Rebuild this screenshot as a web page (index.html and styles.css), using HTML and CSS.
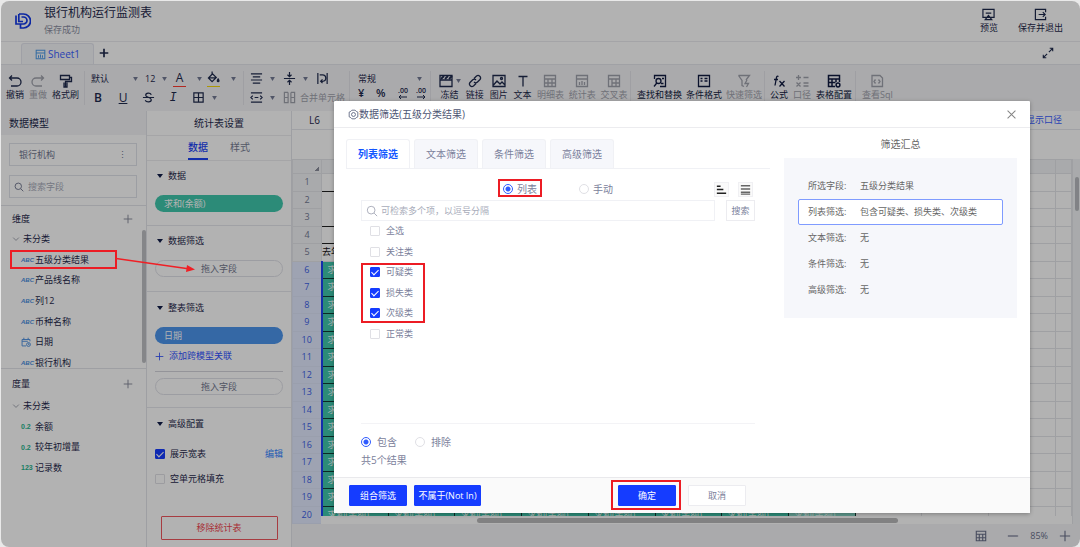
FILE: index.html
```html
<!DOCTYPE html>
<html lang="zh-CN">
<head>
<meta charset="utf-8">
<title>银行机构运行监测表</title>
<link rel="stylesheet" href="styles.css">
</head>
<body>
<svg class="sprite" aria-hidden="true">
  <symbol id="caret" viewBox="0 0 6 5"><path d="M0 0h6L3 5z" fill="#737a94"/></symbol>
  <symbol id="undo" viewBox="0 0 14 14"><path d="M4 1.500 1.500 4 4 6.500M1.500 4H9a3.700 3.700 0 0 1 0 8H3"/></symbol>
  <symbol id="redo" viewBox="0 0 14 14"><path d="M10 1.500 12.500 4 10 6.500M12.500 4H5a3.700 3.700 0 0 0 0 8h6"/></symbol>
  <symbol id="brush" viewBox="0 0 14 14"><path d="M1.500 1.500h9v4h-9zM10.500 3.500h2v4H6.500v5M5 8.500v4.500h3V8.500"/></symbol>
  <symbol id="bucket" viewBox="0 0 14 14"><path d="M5.500 .500v3M6 3 1.500 7.500 5.500 11.500 10 7zM2 7.500h7.500"/><path d="M12 8.500c-1.500 2-1 3 0 3s1.500-1 0-3z" fill="currentColor"/></symbol>
  <symbol id="strike" viewBox="0 0 14 14"><path d="M10 4C9 1.500 4 1.700 4 4.500 4 7 10 6.500 10 9.500 10 12.500 4.500 12.500 3.500 10M1 7h12"/></symbol>
  <symbol id="borders" viewBox="0 0 14 14"><path d="M2 2h10v10H2zM7 2v10M2 7h10"/></symbol>
  <symbol id="align" viewBox="0 0 14 14"><path d="M1 2h12M3 5.300h8M1 8.600h12M3 12h8"/></symbol>
  <symbol id="valign" viewBox="0 0 14 14"><path d="M1 7h12M7 0v5M4.800 3 7 5l2.200-2M7 14V9M4.800 11 7 9l2.200 2"/></symbol>
  <symbol id="wrap" viewBox="0 0 14 14"><path d="M2 1v12M12 1v12M4 3h3a3 3 0 0 1 0 7H5M7 8l-2 2 2 2"/></symbol>
  <symbol id="indent" viewBox="0 0 14 14"><path d="M1 2h12M1 12h12M5 7h4M3 5 1 7l2 2M11 5l2 2-2 2"/></symbol>
  <symbol id="merge" viewBox="0 0 14 14"><path d="M5.500 1.500h-4v11h4v-11M8.500 1.500h4v11h-4v-11M1.500 7h4M8.500 7h4"/></symbol>
  <symbol id="freeze" viewBox="0 0 14 14"><path d="M1 1.500h12v11H1zM1 6h12"/><path d="m2 5 3-3M6 5l3-3M10 5l3-3" stroke-width="1.800"/></symbol>
  <symbol id="link" viewBox="0 0 14 14"><path d="M6 4.500 8.500 2a2.500 2.500 0 0 1 3.500 3.500L9.500 8A2.500 2.500 0 0 1 6 8M8 9.500 5.500 12A2.500 2.500 0 0 1 2 8.500L4.500 6A2.500 2.500 0 0 1 8 6"/></symbol>
  <symbol id="image" viewBox="0 0 14 14"><path d="M1 1.500h12v11H1zM1.500 11l3.500-4 3 3 2-2 3 3"/><circle cx="9.500" cy="4.500" r="1"/></symbol>
  <symbol id="text" viewBox="0 0 14 14"><path d="M2.500 2.500h9M7 2.500v10"/></symbol>
  <symbol id="grid" viewBox="0 0 14 14"><path d="M1.500 1.500h11v11h-11zM1.500 5h11M1.500 9h11M5 5v7.500M9 5v7.500"/></symbol>
  <symbol id="chart" viewBox="0 0 14 14"><path d="M1.500 1.500h11v11h-11zM1.500 5h11M4.500 8v3M7 7v4M9.500 8v3"/></symbol>
  <symbol id="cross" viewBox="0 0 14 14"><path d="M1.500 1.500h11v11h-11zM1.500 5h11M5 9h7.500M5 5v7.500M9 5v7.500"/></symbol>
  <symbol id="find" viewBox="0 0 14 14"><path d="M1.500 5V1.500h11v11H7M8 9.500h2.500M9 4.500h2"/><circle cx="5.500" cy="7" r="2.500"/><path d="M3.800 9 1 12.500"/></symbol>
  <symbol id="cond" viewBox="0 0 14 14"><path d="M1.500 1.500h11v11h-11zM3.500 4.500h2M3.500 7h2M7.500 4.500h3M7.500 7h3"/></symbol>
  <symbol id="funnel" viewBox="0 0 14 14"><path d="M1.500 1.500h11L9 6M1.500 1.500 5 6.500v5l2 1M10 6 8 9.500h3.500L9.500 13"/></symbol>
  <symbol id="calc" viewBox="0 0 14 14"><path d="M1 3.500h5M3.500 1v5M8.500 3.500h5M1.500 8.500l4 4M5.500 8.500l-4 4M8.500 9h5M8.500 12h5"/></symbol>
  <symbol id="gridset" viewBox="0 0 14 14"><path d="M8 12.500H1.500v-11h11V8M1.500 5h11M1.500 8.500h7M5 5v7.500M9 5v3" stroke-width="1.500"/><circle cx="11" cy="11" r="1.900" stroke-width="1.500"/></symbol>
  <symbol id="sql" viewBox="0 0 14 14"><path d="M2 1.500h8l2.500 2.500v8.500H2zM5.500 5.500 4 7.500l1.500 2M8.500 5.500l1.500 2-1.500 2"/></symbol>
  <symbol id="fx" viewBox="0 0 14 14"><path d="M6.500 2.500C4.800 1.500 4.500 3 4.200 5L3 11.500M2 5.500h4M7.500 7l5 5.500M12.500 7l-5 5.500"/></symbol>
  <symbol id="search" viewBox="0 0 14 14"><circle cx="6" cy="6" r="4.500"/><path d="m9.500 9.500 3.500 3.500"/></symbol>
  <symbol id="plus" viewBox="0 0 14 14"><path d="M7 1v12M1 7h12"/></symbol>
  <symbol id="chev" viewBox="0 0 14 14"><path d="m2 4.500 5 5 5-5"/></symbol>
  <symbol id="date" viewBox="0 0 14 14"><path d="M7 12.500H1.500v-9h11V6M1.500 6h8M4 1v3M10 1v3"/><circle cx="10.500" cy="10.500" r="2.700"/><path d="M10.500 9v1.700h1.300"/></symbol>
</svg>

<div class="app">
  <header class="top">
    <svg class="logo" viewBox="0 0 16 16"><path d="M4 1h4.500a6.700 6.700 0 0 1 0 14H5.500v-3.500M1 2.500v8.500h7.500a3 3 0 0 0 0-7H6.500M3.800 1v7.500H8"/></svg>
    <div class="doc"><h1>银行机构运行监测表</h1><p>保存成功</p></div>
    <div class="top-actions">
      <button class="tool"><svg class="ic" viewBox="0 0 14 14"><path d="M1 1.500h12V10H1zM4 5.500h6M7 8l-3.500 4.500h7z"/></svg>预览</button>
      <button class="tool"><svg class="ic" viewBox="0 0 14 14"><path d="M12.500 4.500v-3h-11v11h11v-3M5 7h7M9.500 4.500 12 7l-2.500 2.500"/></svg>保存并退出</button>
    </div>
  </header>
  <nav class="sheets">
    <button class="sheet-tab"><svg class="ic" viewBox="0 0 14 14"><use href="#chart"/></svg>Sheet1</button>
    <button class="add-sheet" aria-label="新增"><svg class="ic" viewBox="0 0 14 14"><use href="#plus"/></svg></button>
    <button class="expand" aria-label="全屏"><svg class="ic" viewBox="0 0 14 14"><path d="M8 6l4.500-4.500M9 1.500h3.500V5M6 8l-4.500 4.500M1.500 9v3.500H5"/></svg></button>
  </nav>

  <div class="toolbar">
    <div class="group g-edit">
      <button class="tool"><svg class="ic"><use href="#undo"/></svg>撤销</button>
      <button class="tool off"><svg class="ic"><use href="#redo"/></svg>重做</button>
      <button class="tool"><svg class="ic"><use href="#brush"/></svg>格式刷</button>
    </div>
    <div class="group stack g-font">
      <div class="line"><button class="pick w-font">默认<svg class="car"><use href="#caret"/></svg></button><button class="pick w-size">12<svg class="car"><use href="#caret"/></svg></button><button class="pick w-col"><span class="mark red">A</span><svg class="car"><use href="#caret"/></svg></button><button class="pick w-col"><span class="mark yellow"><svg class="ic"><use href="#bucket"/></svg></span><svg class="car"><use href="#caret"/></svg></button></div>
      <div class="line even"><button class="b">B</button><button class="u">U</button><button><svg class="ic"><use href="#strike"/></svg></button><button class="i">I</button><button><svg class="ic"><use href="#borders"/></svg><svg class="car"><use href="#caret"/></svg></button></div>
    </div>
    <div class="group stack g-align">
      <div class="line even3"><button><svg class="ic"><use href="#align"/></svg><svg class="car"><use href="#caret"/></svg></button><button><svg class="ic"><use href="#valign"/></svg><svg class="car"><use href="#caret"/></svg></button><button><svg class="ic"><use href="#wrap"/></svg></button></div>
      <div class="line even3"><button><svg class="ic"><use href="#indent"/></svg><svg class="car"><use href="#caret"/></svg></button><button class="off merge"><svg class="ic"><use href="#merge"/></svg>合并单元格</button></div>
    </div>
    <div class="group stack g-num">
      <div class="line"><button class="pick w-num">常规<svg class="car"><use href="#caret"/></svg></button></div>
      <div class="line nums"><button>¥</button><button>%</button><button class="dec">.00<svg viewBox="0 0 10 4"><path d="M9 2H1M3 0 1 2l2 2"/></svg></button><button class="dec">.00<svg viewBox="0 0 10 4"><path d="M1 2h8M7 0l2 2-2 2"/></svg></button></div>
    </div>
    <div class="group g-insert">
      <button class="tool w26"><span class="duo"><svg class="ic"><use href="#freeze"/></svg><svg class="car"><use href="#caret"/></svg></span>冻结</button>
      <button class="tool w24"><svg class="ic"><use href="#link"/></svg>链接</button>
      <button class="tool w24"><svg class="ic"><use href="#image"/></svg>图片</button>
      <button class="tool w24"><svg class="ic"><use href="#text"/></svg>文本</button>
      <button class="tool off w32"><svg class="ic"><use href="#grid"/></svg>明细表</button>
      <button class="tool off w32"><svg class="ic"><use href="#chart"/></svg>统计表</button>
      <button class="tool off w32"><svg class="ic"><use href="#cross"/></svg>交叉表</button>
    </div>
    <div class="group g-find">
      <button class="tool strong"><svg class="ic"><use href="#find"/></svg>查找和替换</button>
      <button class="tool strong"><svg class="ic"><use href="#cond"/></svg>条件格式</button>
      <button class="tool off"><svg class="ic"><use href="#funnel"/></svg>快速筛选</button>
    </div>
    <div class="group g-formula">
      <button class="tool strong"><svg class="ic"><use href="#fx"/></svg>公式</button>
      <button class="tool off"><svg class="ic"><use href="#calc"/></svg>口径</button>
      <button class="tool strong"><svg class="ic"><use href="#gridset"/></svg>表格配置</button>
    </div>
    <div class="group g-sql">
      <button class="tool off"><svg class="ic"><use href="#sql"/></svg>查看Sql</button>
    </div>
  </div>

  <main class="work">
    <aside class="model">
      <h2>数据模型</h2>
      <button class="field source">银行机构<span class="dots">⋮</span></button>
      <label class="field find"><svg class="ic"><use href="#search"/></svg><input type="text" placeholder="搜索字段" aria-label="搜索字段"></label>
      <section class="dims">
        <h3>维度<svg class="ic"><use href="#plus"/></svg></h3>
        <ul class="tree seven">
          <li class="root"><svg class="ic"><use href="#chev"/></svg>未分类</li>
          <li><i>ABC</i>五级分类结果</li>
          <li><i>ABC</i>产品线名称</li>
          <li><i>ABC</i>列12</li>
          <li><i>ABC</i>币种名称</li>
          <li><i><svg class="ic"><use href="#date"/></svg></i>日期</li>
          <li><i>ABC</i>银行机构</li>
        </ul>
        <span class="thumb"></span>
      </section>
      <section class="measures">
        <h3>度量<svg class="ic"><use href="#plus"/></svg></h3>
        <ul class="tree four">
          <li class="root"><svg class="ic"><use href="#chev"/></svg>未分类</li>
          <li><i class="num">0.2</i>余额</li>
          <li><i class="num">0.2</i>较年初增量</li>
          <li><i class="num">123</i>记录数</li>
        </ul>
      </section>
    </aside>

    <aside class="settings">
      <h2>统计表设置</h2>
      <div class="tabs"><button class="on">数据</button><button>样式</button></div>
      <section class="s-data"><h3>数据</h3><div class="pill teal">求和(余额)</div></section>
      <section class="s-filter"><h3>数据筛选</h3><div class="pill drop">拖入字段</div></section>
      <section class="s-table"><h3>整表筛选</h3><div class="pill blue">日期</div>
        <button class="relate"><svg class="ic"><use href="#plus"/></svg>添加跨模型关联</button>
        <hr><div class="pill drop">拖入字段</div></section>
      <section class="s-adv"><h3>高级配置</h3>
        <div class="opt"><label><input type="checkbox" checked>展示宽表</label><a href="#">编辑</a></div>
        <div class="opt"><label><input type="checkbox">空单元格填充</label></div>
        <button class="remove">移除统计表</button></section>
    </aside>

    <section class="sheet">
      <div class="cellbar"><span>L6</span><a href="#">显示口径</a></div>
      <div class="formula"></div>
      <div class="canvas">
        <div class="gridwrap">
        <table class="cells">
          <colgroup><col class="c-head"><col><col><col><col><col><col><col><col><col><col><col><col class="c-last"></colgroup>
          <thead><tr><th class="corner"></th><th></th><th></th><th></th><th></th><th></th><th></th><th></th><th></th><th></th><th></th><th></th><th></th></tr></thead>
          <tbody id="rows"></tbody>
        </table>
        <span class="hbar"><span></span></span>
        </div>
        <div class="vbar"><span></span></div>
      </div>
      <footer class="status"><svg class="ic big"><use href="#grid"/></svg><button aria-label="缩小"><svg class="ic" viewBox="0 0 14 14"><path d="M1 7h12"/></svg></button><span>85%</span><button aria-label="放大"><svg class="ic"><use href="#plus"/></svg></button></footer>
    </section>
  </main>

  <div class="mask"></div>

  <div class="modal" role="dialog" aria-label="数据筛选">
    <header class="m-head"><svg class="ic thin" viewBox="0 0 14 14"><path d="M5 1.500h4l1.500 1.500 2 1v6l-2 1L9 12.500H5L3.500 11l-2-1V4l2-1z"/><circle cx="7" cy="7" r="2.500"/></svg><h2>数据筛选(五级分类结果)</h2><button aria-label="关闭"><svg class="ic" viewBox="0 0 14 14"><path d="m2 2 10 10M12 2 2 12"/></svg></button></header>
    <div class="m-body">
      <div class="m-left">
        <div class="m-tabs"><button class="on">列表筛选</button><button>文本筛选</button><button>条件筛选</button><button>高级筛选</button></div>
        <div class="m-form">
          <div class="mode">
            <label><input type="radio" name="mode" checked>列表</label>
            <label><input type="radio" name="mode">手动</label>
            <div class="sorts"><button aria-label="排序"><svg viewBox="0 0 14 14"><path d="M2 3.500h4M2 7h7M2 11h10"/></svg></button><button aria-label="列表"><svg viewBox="0 0 14 14"><path d="M2 3h10M2 6.500h10M2 10h10M2 12h10" class="soft"/></svg></button></div>
          </div>
          <div class="query"><label><svg class="ic"><use href="#search"/></svg><input type="text" placeholder="可检索多个项，以逗号分隔" aria-label="检索"></label><button>搜索</button></div>
          <div class="choices">
            <label><input type="checkbox">全选</label>
            <label><input type="checkbox">关注类</label>
            <label><input type="checkbox" checked>可疑类</label>
            <label><input type="checkbox" checked>损失类</label>
            <label><input type="checkbox" checked>次级类</label>
            <label><input type="checkbox">正常类</label>
          </div>
          <div class="include">
            <div><label><input type="radio" name="inc" checked>包含</label><label><input type="radio" name="inc">排除</label></div>
            <p>共5个结果</p>
          </div>
        </div>
      </div>
      <div class="m-right">
        <h3>筛选汇总</h3>
        <dl>
          <div><dt>所选字段:</dt><dd>五级分类结果</dd></div>
          <div class="on"><dt>列表筛选:</dt><dd>包含可疑类、损失类、次级类</dd></div>
          <div><dt>文本筛选:</dt><dd>无</dd></div>
          <div><dt>条件筛选:</dt><dd>无</dd></div>
          <div><dt>高级筛选:</dt><dd>无</dd></div>
        </dl>
      </div>
    </div>
    <footer class="m-foot"><button class="pri">组合筛选</button><button class="pri wide">不属于(Not In)</button><button class="pri ok">确定</button><button>取消</button></footer>
  </div>

  <span class="note n-field"></span><span class="note n-mode"></span><span class="note n-list"></span><span class="note n-ok"></span>
  <svg class="arrow" viewBox="0 0 80 16"><path d="M0 1.500 74 12" stroke="#f01f25" stroke-width="1.500"/><path d="m71 8 8 4.500-9 2.500z" fill="#f01f25"/></svg>
</div>
<script src="rows.js"></script>
</body>
</html>
```
FILE: rows.js
```js
const body = document.getElementById('rows');
for (let n = 1; n <= 20; n++) {
  const tr = document.createElement('tr');
  if (n >= 6) tr.className = 'sel';
  const th = document.createElement('th');
  th.textContent = n;
  tr.append(th);
  for (let c = 1; c <= 12; c++) {
    const td = document.createElement('td');
    if (n >= 6 && c <= 8) {
      td.className = c === 8 ? 'val pale' : 'val';
      if (c === 1 || n === 20) td.textContent = '求和(余额)';
    } else if (n === 5 && c === 1) {
      td.className = 'year';
      td.textContent = '去年余额';
    } else if (c <= 8 && (n === 1 || n === 3 || n === 4)) {
      td.className = 'rule';
    } else if (c <= 8 && n === 2) {
      td.className = 'open';
    }
    tr.append(td);
  }
  body.append(tr);
}
```
FILE: styles.css
```css
* { box-sizing: border-box; margin: 0; padding: 0; }
body {
  background: #e9e9e9; color: #1f2a4d;
  font: 9px/14px "Open Sans", "Noto Sans CJK SC", sans-serif;
  height: 100vh; padding: 1px 0 0 1px; overflow: hidden;
}
button, input { font: inherit; color: inherit; background: none; border: 0; }
button { cursor: pointer; white-space: nowrap; }
h1, h2, h3 { font-size: inherit; font-weight: 400; }
ul { list-style: none; }
a { text-decoration: none; color: #2f62ff; }
svg { fill: none; stroke: currentColor; flex: none; }
symbol { overflow: visible; }
.sprite { position: absolute; width: 0; height: 0; }
.ic { width: 14px; height: 14px; stroke-width: 1.3; }
.car { width: 5px; height: 4px; stroke: none; }

.app { position: relative; height: 100%; display: flex; flex-direction: column; background: #fff; border-radius: 8px; overflow: hidden; }

.top { display: flex; align-items: center; height: 41px; padding: 0 17px 0 14px; border-bottom: 1px solid #ebebf0; }
.logo { width: 16px; height: 16px; stroke: #1238e8; stroke-width: 1.7; margin-right: 13px; }
.doc h1 { font-size: 12px; line-height: 18px; }
.doc p { color: #8b8fa3; line-height: 16px; }
.top-actions { margin-left: auto; display: flex; gap: 20px; }
.tool { display: flex; flex-direction: column; align-items: center; line-height: 14px; }
.top-actions .ic { width: 13px; height: 13px; }
.off { color: #a0a2ac; }
.strong { color: #101a40; }

.sheets { display: flex; align-items: center; height: 23px; padding: 0 26px 0 20px; border-bottom: 1px solid #e6e7ec; }
.sheet-tab { display: flex; align-items: center; justify-content: center; gap: 2px; width: 73px; height: 21px; align-self: flex-end; background: #f5f6fa; border: 1px solid #e4e6ee; border-bottom: 0; border-radius: 3px 3px 0 0; color: #3b5fff; font-size: 10px; }
.sheet-tab .ic { width: 11px; height: 11px; color: #4c9be8; }
.add-sheet { display: flex; align-items: center; margin-left: 5px; height: 14px; }
.add-sheet .ic { width: 10px; height: 10px; stroke-width: 2.4; }
.expand { display: flex; margin-left: auto; height: 12px; }
.expand .ic { width: 12px; height: 12px; }

.toolbar { display: flex; align-items: center; height: 46px; background: #f4f4f7; }
.group { display: flex; align-items: center; height: 34px; border-right: 1px solid #e4e4ea; flex: none; }
.group:last-child { border: 0; }
.g-edit { width: 84px; padding-left: 5px; gap: 5px; }
.stack { flex-direction: column; align-items: stretch; justify-content: space-between; }
.g-font { width: 159px; padding-left: 6px; }
.line { display: flex; align-items: center; height: 15px; }
.line button { display: flex; align-items: center; justify-content: center; gap: 7px; }
.line .ic { width: 13px; height: 13px; }
.line .pick { justify-content: space-between; }
.w-font { width: 47px; margin-right: 7px; }
.w-size { width: 22px; margin-right: 6px; }
.w-col { width: 29px; margin-right: 5px; }
.mark { display: flex; width: 13px; height: 16px; justify-content: center; border-bottom: 1px solid; font-size: 12px; }
.red { border-color: #ff3b30; }
.yellow { border-color: #f5d90a; }
.even { gap: 11px; }
.even button { width: 14px; font-size: 12px; }
.even button:last-child { width: 26px; gap: 7px; }
.even .b { font-weight: 600; }
.u { text-decoration: underline; }
.i { font-style: italic; font-family: "Liberation Mono", monospace; }
.g-align { width: 106px; padding-left: 6px; }
.even3 { gap: 7px; }
.even3 button { width: 26px; gap: 7px; justify-content: flex-start; }
.even3 .merge { width: auto; gap: 4px; }
.g-num { width: 81px; padding-left: 8px; }
.w-num { width: 64px; }
.nums { height: 18px; align-items: flex-start; font-weight: 600; }
.nums button { width: 19px; justify-content: flex-start; font-size: 11px; line-height: 12px; }
.nums .dec { flex-direction: column; gap: 0; align-items: center; font-size: 7px; line-height: 8px; }
.dec svg { width: 10px; height: 4px; }
.g-insert { width: 200px; padding-left: 5px; }
.w26 { width: 27px; }
.w24 { width: 24px; }
.w32 { width: 32px; }
.duo { display: flex; align-items: center; gap: 3px; margin-right: -2px; }
.g-find { width: 134px; padding-left: 6px; gap: 4px; }
.g-formula { width: 91px; padding-left: 5px; gap: 5px; }
.g-sql { padding-left: 6px; }

.work { flex: 1; display: flex; min-height: 0; }
.model, .settings { display: flex; flex-direction: column; flex: none; width: 146px; border-right: 1px solid #e3e4ea; }
.model h2 { height: 24px; padding: 0 8px; background: #f4f4f7; font-size: 10px; line-height: 24px; }
.field { display: flex; align-items: center; height: 23px; margin: 8px 9px 0 8px; border: 1px solid #e0e2ea; color: #70768f; }
.source { justify-content: space-between; padding: 0 9px; }
.find { gap: 4px; padding: 0 4px; margin-top: 9px; }
.find .ic { width: 10px; height: 10px; }
.find input { width: 90px; }
::placeholder { color: #a8acba; }
.dims { position: relative; height: 163px; margin-top: 7px; padding-top: 5px; border-top: 1px solid #e3e4ea; overflow: hidden; }
.measures { border-top: 1px solid #e3e4ea; padding-top: 7px; }
.model h3 { display: flex; align-items: center; justify-content: space-between; height: 16px; padding: 0 13px 0 11px; }
.model h3 .ic { width: 10px; height: 10px; color: #858998; }
.tree { display: grid; grid-auto-rows: 1fr; }
.seven { height: 144px; margin-top: 2px; }
.four { height: 82px; margin-top: 4px; }
.tree li { display: flex; align-items: center; padding-left: 20px; }
.tree .root { padding-left: 11px; gap: 3px; }
.root .ic { width: 8px; height: 8px; color: #858998; }
.tree i { width: 14px; color: #4b8fe0; font: italic 700 6px "Liberation Sans Narrow", "Liberation Sans", sans-serif; }
.tree i .ic { display: block; width: 10px; height: 10px; }
.tree .num { color: #28b48e; font-style: normal; font-size: 7px; }
.thumb { position: absolute; right: 0; top: 24px; width: 4px; height: 133px; border-radius: 3px; background: #bfc0c4; }

.settings { width: 145px; }
.settings h2 { height: 25px; font-size: 10px; line-height: 24px; text-align: center; border-bottom: 1px solid #ececf0; }
.tabs { display: flex; justify-content: center; gap: 22px; height: 25px; border-bottom: 1px solid #ececf0; font-size: 10px; color: #777d94; }
.tabs button { height: 24px; border-bottom: 2px solid transparent; }
.tabs .on { color: #1c43f5; font-weight: 500; border-bottom-color: #1c43f5; }
.settings section { padding: 7px 8px 0; border-bottom: 1px solid #e6e7ec; }
.settings h3 { display: flex; align-items: center; gap: 5px; height: 16px; padding-left: 2px; }
.settings h3::before { content: ""; border: 3px solid transparent; border-top: 4px solid #101c48; border-bottom: 0; }
.pill { height: 17px; border-radius: 9px; padding: 0 9px; line-height: 17px; margin-top: 11px; color: #fff; }
.teal { background: #40c7ad; }
.blue { background: #4c95ed; }
.drop { border: 1px solid #e0e1e8; color: #73788f; text-align: center; line-height: 15px; }
.settings .s-data { height: 65px; }
.settings .s-filter { height: 66px; }
.settings .s-table { height: 116px; padding-top: 8px; }
.relate { display: flex; align-items: center; gap: 5px; height: 14px; margin-top: 5px; color: #2f50ff; }
.relate .ic { width: 9px; height: 9px; }
.s-table hr { border: 0; border-top: 1px solid #d4d5db; margin-top: 8px; }
.s-table hr + .pill { margin-top: 6px; }
.settings .s-adv { flex: 1; border: 0; padding-top: 8px; }
.opt { display: flex; justify-content: space-between; height: 14px; margin-top: 11px; }
.s-adv h3 + .opt { margin-top: 15px; }
.opt label { display: flex; align-items: center; gap: 5px; }
.opt a { color: #3385ff; }
.remove { display: block; width: 117px; height: 24px; margin: 30px auto 0; border: 1px solid #f0565e; border-radius: 1px; color: #f0464e; }

input[type=checkbox], input[type=radio] { appearance: none; flex: none; width: 10px; height: 10px; border: 1px solid #e0e0e5; border-radius: 1px; }
input[type=checkbox]:checked { border-color: #153cff; background: #153cff; display: grid; place-items: start center; }
input[type=checkbox]:checked::before { content: ""; width: 3px; height: 6px; border: solid #fff; border-width: 0 1px 1px 0; transform: rotate(45deg); }
input[type=radio] { border-radius: 50%; }
input[type=radio]:checked { border-color: #2f5bff; background: radial-gradient(#2f5bff 0 2px, #fff 3px); }

.sheet { flex: 1; min-width: 0; display: flex; flex-direction: column; }
.cellbar { display: flex; justify-content: space-between; height: 19px; padding: 0 18px 0 17px; border-bottom: 1px solid #e6e7ec; line-height: 18px; font-size: 10px; }
.cellbar a { font-size: 9px; color: #3b5fff; }
.formula { height: 29px; }
.canvas { flex: 1; min-height: 0; display: flex; background: #f3f4f6; }
.gridwrap { position: relative; flex: 1; min-width: 0; overflow: hidden; }
.cells { width: 100%; height: 100%; table-layout: fixed; border-collapse: collapse; background: #fff; line-height: 12px; }
.c-head { width: 29px; }
.c-last { width: 16px; }
.cells td, .cells th { border: 1px solid #e4e5ea; overflow: hidden; white-space: nowrap; font-weight: 400; color: #737a94; }
.cells th { background: #f3f4f7; }
.cells thead tr { height: 14px; }
.cells .corner { background: linear-gradient(135deg, transparent 50%, #8b8f9c 50%) right 2px bottom 2px / 5px 4px no-repeat #f3f4f7; }
.cells .rule { border-bottom-color: #222; }
.cells .open { border-bottom-color: #fff; }
.cells .sel th { background: #e3eaff; color: #3b5fe8; border-color: #dde4f8; border-right: 2px solid #1c43f5; }
.cells .val { background: #40c7ad; color: #eafffa; border: 1px solid #123c34; padding-left: 5px; }
.cells .pale { background: #86d9c8; }
.cells .year { color: #111; }
.hbar { position: absolute; left: 29px; right: 0; bottom: 0; height: 8px; background: #fff; }
.hbar span { position: absolute; left: 156px; width: 56%; top: 2px; height: 5px; border-radius: 3px; background: #b9b9bb; }
.vbar { width: 8px; padding: 18px 1px 0 2px; border-left: 1px solid #e4e5ea; }
.vbar span { display: block; height: 34px; border-radius: 3px; background: #b9bbc0; }
.status { display: flex; align-items: center; justify-content: flex-end; gap: 11px; height: 23px; padding-right: 9px; background: #f4f4f7; color: #6a708a; }
.status .ic { display: block; width: 12px; height: 12px; }
.status .big { margin-right: 9px; }

.mask { position: absolute; inset: 0; background: rgba(0, 0, 0, .3); }

.modal { position: absolute; left: 333px; right: 50px; top: 100px; bottom: 34px; display: flex; flex-direction: column; background: #fff; border-radius: 1px; box-shadow: 0 1px 4px rgba(0, 0, 0, .3); color: #7b819b; }
.m-head { display: flex; align-items: center; height: 27px; padding: 0 13px 0 14px; border-bottom: 1px solid #ececef; color: #4d5573; }
.m-head h2 { font-size: 10px; }
.m-head .ic { width: 11px; height: 11px; }
.m-head .thin { stroke-width: 1; }
.m-head button { display: flex; margin-left: auto; height: 11px; color: #858585; }
.m-body { flex: 1; display: flex; min-height: 0; }
.m-left { flex: 1; display: flex; flex-direction: column; padding: 11px 0 0 12px; }
.m-tabs { display: flex; gap: 4px; border-bottom: 1px solid #f0f1f5; }
.m-tabs button { width: 64px; height: 29px; background: #f6f7fb; border: 1px solid #f0f1f5; border-bottom: 0; border-radius: 3px 3px 0 0; font-size: 10px; }
.m-tabs .on { background: #fff; color: #1256ff; font-weight: 700; }
.m-form { flex: 1; display: flex; flex-direction: column; padding: 10px 15px 0 15px; }
.mode { position: relative; display: flex; justify-content: center; gap: 42px; height: 20px; font-size: 10px; }
.mode label, .include label { display: flex; align-items: center; gap: 4px; }
.sorts { position: absolute; right: 2px; top: 3px; display: flex; gap: 9px; }
.sorts button { width: 15px; height: 15px; border: 1px solid #f0f0f3; background: #fafafa; }
.sorts svg { display: block; width: 13px; height: 13px; stroke: #222; stroke-width: 1.5; }
.sorts .soft { stroke: #666; }
.query { display: flex; gap: 11px; margin-top: 1px; }
.query label { flex: 1; display: flex; align-items: center; gap: 3px; height: 21px; padding: 0 4px; border: 1px solid #f0f1f5; }
.query .ic { width: 12px; height: 12px; stroke-width: 1; color: #a0a4b3; }
.query input { flex: 1; }
.query button { width: 29px; border: 1px solid #ececf0; }
.choices { display: grid; grid-auto-rows: 1fr; height: 123px; padding-left: 9px; }
.choices label { display: flex; align-items: center; gap: 6px; }
.include { margin-top: auto; height: 54px; padding-top: 9px; border-top: 1px solid #f3f3f6; font-size: 10px; line-height: 18px; }
.include div { display: flex; gap: 18px; }
.include label { gap: 6px; }
.m-right { width: 260px; padding: 7px 13px 0 14px; color: #666; }
.m-right h3 { font-size: 10px; line-height: 18px; text-align: center; }
.m-right dl { margin-top: 5px; height: 160px; padding: 15px 14px; background: #f6f7fb; }
.m-right dl div { display: flex; align-items: center; height: 26px; padding: 0 9px; border: 1px solid transparent; border-radius: 2px; }
.m-right dl .on { background: #fff; border-color: #7f9bff; }
.m-right dt { width: 52px; }
.m-foot { display: flex; align-items: center; height: 36px; padding: 0 15px; border-top: 1px solid #e9e9ec; background: #fafafa; }
.m-foot button { width: 58px; height: 21px; margin-right: 7px; background: #fff; border: 1px solid #ececf0; border-radius: 1px; }
.m-foot .pri { background: #153cff; border-color: #153cff; color: #fff; }
.m-foot .wide { width: 67px; }
.m-foot .ok { margin: 0 12px 0 130px; }

.note { position: absolute; border: 2px solid #ec1c24; }
.n-field { left: 9px; top: 249px; width: 107px; height: 19px; }
.n-mode { left: 497px; top: 178px; width: 44px; height: 18px; }
.n-list { left: 360px; top: 262px; width: 64px; height: 60px; }
.n-ok { left: 610px; top: 479px; width: 70px; height: 30px; }
.arrow { position: absolute; left: 115px; top: 256px; width: 80px; height: 16px; stroke: none; }
```
